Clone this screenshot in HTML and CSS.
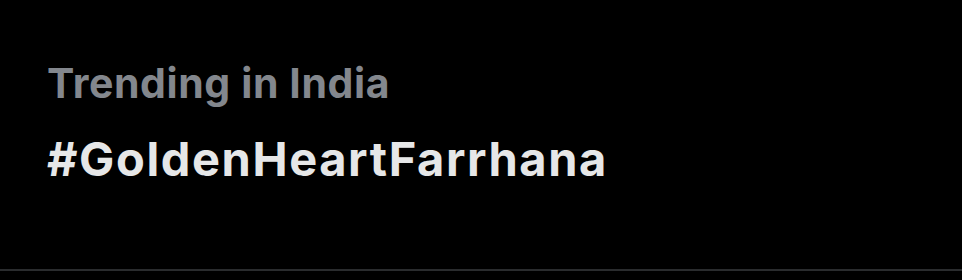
FILE: index.html
```html
<!DOCTYPE html>
<html lang="en">
<head>
    <meta charset="UTF-8">
    <title>Trending</title>
    <link rel="stylesheet" href="styles.css">
</head>
<body>
    <div class="trend">
        <div class="trend-context">Trending in India</div>
        <div class="trend-name">#GoldenHeartFarrhana</div>
    </div>
</body>
</html>
```

FILE: styles.css
```css
body {
    margin: 0;
    background-color: #000;
    font-family: Inter, "Open Sans", sans-serif;
}
.trend {
    height: 271px;
    box-sizing: border-box;
    padding: 55px 0 0 47px;
    border-bottom: 2px solid #2a2c2e;
}
.trend-context {
    color: #83878d;
    font-size: 41px;
    font-weight: 700;
    letter-spacing: 0.6px;
    line-height: 56px;
}
.trend-name {
    margin-top: 20px;
    color: #e6e7e8;
    font-size: 47px;
    font-weight: 700;
    letter-spacing: 1.6px;
    line-height: 56px;
}
```
